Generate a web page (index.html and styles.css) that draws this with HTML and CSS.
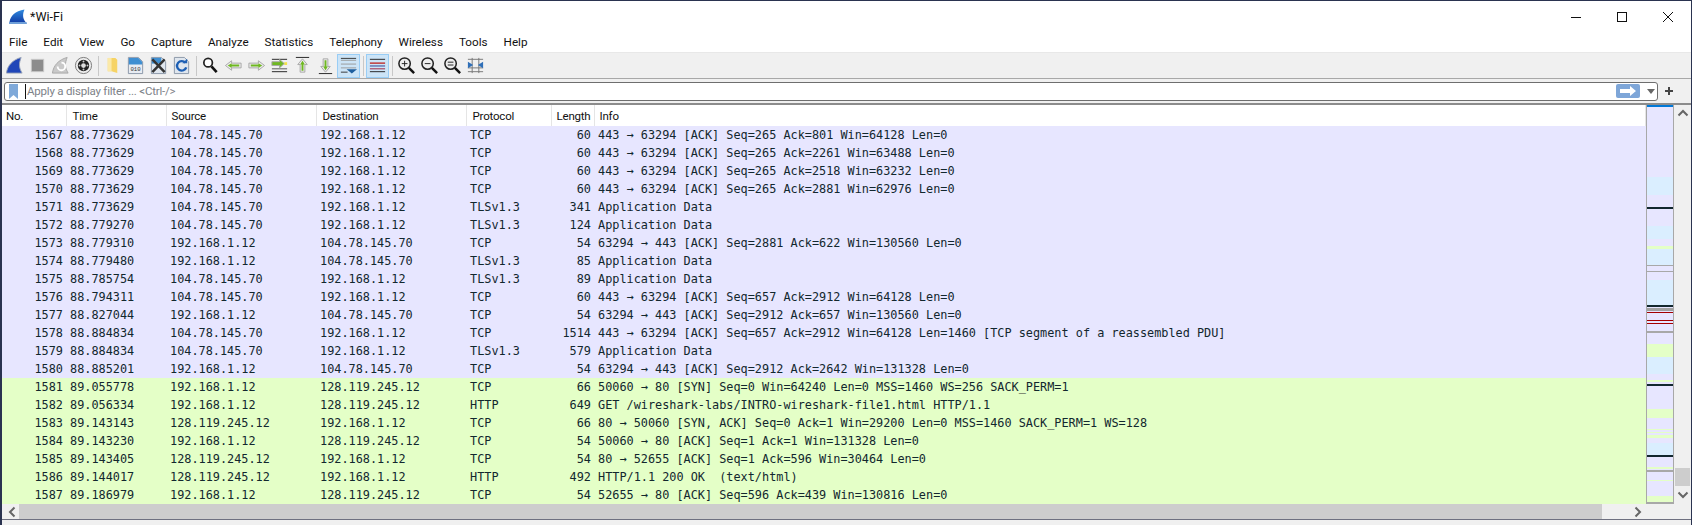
FILE: index.html
```html
<!DOCTYPE html>
<html lang="en">
  <head>
    <meta charset="UTF-8" />
    <title>*Wi-Fi</title>
    <link rel="stylesheet" href="styles.css">
  </head>
  <body>
    <div class="window">
      <header class="titlebar">
        <svg class="appIcon" width="18" height="16" viewBox="0 0 18 16">
          <defs>
            <linearGradient id="fin" x1="0" y1="0" x2="0" y2="1">
              <stop offset="0" stop-color="#2f8be0" />
              <stop offset="1" stop-color="#1340a8" />
            </linearGradient>
          </defs>
          <path d="M0.5 13 C1.5 7 6 2 15.5 0.5 C13.5 5 13.5 9 16.5 13 Z" fill="url(#fin)" />
          <path d="M0 13 H17.5 L18 15 H0 Z" fill="#6f9fd8" />
        </svg>
        <span class="windowName">*Wi-Fi</span>
        <div class="winButtons">
          <svg width="46" height="30" viewBox="0 0 46 30"><path d="M18 15.5 H28" stroke="#111" fill="none" /></svg>
          <svg width="46" height="30" viewBox="0 0 46 30"><rect x="18.5" y="10.5" width="9" height="9" stroke="#111" fill="none" /></svg>
          <svg width="46" height="30" viewBox="0 0 46 30"><path d="M18 10 L28 20 M28 10 L18 20" stroke="#111" fill="none" /></svg>
        </div>
      </header>

      <nav class="menu">
        <span>File</span>
        <span>Edit</span>
        <span>View</span>
        <span>Go</span>
        <span>Capture</span>
        <span>Analyze</span>
        <span>Statistics</span>
        <span>Telephony</span>
        <span>Wireless</span>
        <span>Tools</span>
        <span>Help</span>
      </nav>

      <div class="toolbar">
        <button class="tool"><svg viewBox="0 0 20 20"><path d="M1.500 18 C2.500 10 8 4 17 1.500 C14.500 8 14.500 12 18 18 Z" fill="#2046b8" stroke="#9aa4b8" /></svg></button>
        <button class="tool"><svg viewBox="0 0 20 20"><rect x="3.5" y="3.5" width="13" height="13" fill="#8c8c8c" stroke="#c9c9c9" /></svg></button>
        <button class="tool"><svg viewBox="0 0 20 20"><path d="M1.500 18 C2.500 10 8 4 17 1.500 C14.500 8 14.500 12 18 18 Z" fill="#c9c9c9" stroke="#a8a8a8" /><path d="M11 7 A4 4 0 1 1 7 11" fill="none" stroke="#fff" stroke-width="2" /></svg></button>
        <button class="tool"><svg viewBox="0 0 20 20"><circle cx="10" cy="10" r="8.5" fill="#eee" stroke="#777" /><circle cx="10" cy="10" r="6" fill="#222" /><circle cx="10" cy="10" r="2.5" fill="#ddd" /><circle cx="10" cy="5.8" r="1" fill="#ccc" /><circle cx="10" cy="14.2" r="1" fill="#ccc" /><circle cx="5.8" cy="10" r="1" fill="#ccc" /><circle cx="14.2" cy="10" r="1" fill="#ccc" /></svg></button>
        <i class="sep"></i>
        <button class="tool"><svg viewBox="0 0 20 20"><path d="M5 2 H13 L15 4 V18 L9 16 H5 Z" fill="#f6d365" /><path d="M5 2 H9 V16 H5 Z" fill="#fbe9a8" /></svg></button>
        <button class="tool"><svg viewBox="0 0 20 20"><path d="M2.500 1.500 H13 L17.500 6 V18.500 H2.500 Z" fill="#e8ecf2" stroke="#8a97a8" /><path d="M3 2 H13 L17 6 V9 H3 Z" fill="#3f8fd2" /><text x="10" y="15.500" class="fileText">010</text></svg></button>
        <button class="tool"><svg viewBox="0 0 20 20"><path d="M2.500 1.500 H13 L17.500 6 V18.500 H2.500 Z" fill="#dfe6ee" stroke="#8a97a8" /><path d="M3 2 H13 V8 H3 Z" fill="#3f8fd2" /><path d="M3.500 3.500 L16.500 17 M16.500 3.500 L3.500 17" stroke="#333" stroke-width="2.600" /></svg></button>
        <button class="tool"><svg viewBox="0 0 20 20"><path d="M2.500 1.500 H13 L17.500 6 V18.500 H2.500 Z" fill="#dfe6ee" stroke="#8a97a8" /><path d="M14 7 A5 5 0 1 0 15 12" fill="none" stroke="#1d5fb4" stroke-width="2.500" /><path d="M11 7.500 H16 V3 Z" fill="#1d5fb4" /></svg></button>
        <i class="sep"></i>
        <button class="tool"><svg viewBox="0 0 20 20"><circle cx="7.500" cy="7" r="4.500" fill="#fff" stroke="#222" stroke-width="1.800" /><path d="M11 11 L16.500 17" stroke="#111" stroke-width="2.800" /></svg></button>
        <button class="tool"><svg viewBox="0 0 20 20"><path d="M1.500 10 L8 5 V7.500 H18 V12.500 H8 V15 Z" fill="#eaeaea" stroke="#a8a8a8" /><path d="M4 10 L8 7.500 V9 H16 V11 H8 V12.500 Z" fill="#6fb821" /></svg></button>
        <button class="tool"><svg viewBox="0 0 20 20"><path d="M18.500 10 L12 5 V7.500 H2 V12.500 H12 V15 Z" fill="#eaeaea" stroke="#a8a8a8" /><path d="M16 10 L12 7.500 V9 H4 V11 H12 V12.500 Z" fill="#6fb821" /></svg></button>
        <button class="tool"><svg viewBox="0 0 20 20"><path d="M2 3.500 H18 M2 16.500 H18" stroke="#222" /><path d="M2 13.500 H18" stroke="#555" /><path d="M15 6.500 h3 v3 h-3 z" fill="#f2e24a" /><path d="M15 8 L10 3.500 V6 H2 V10 H10 V12.500 Z" fill="#6fb821" stroke="#a8a8a8" /></svg></button>
        <button class="tool"><svg viewBox="0 0 20 20"><path d="M3 1.500 H17" stroke="#222" /><path d="M10 3 L15 9 H12.500 V17 H7.500 V9 H5 Z" fill="#eaeaea" stroke="#a8a8a8" /><path d="M10 5 L12.500 9 H11 V15.500 H9 V9 H7.500 Z" fill="#6fb821" /></svg></button>
        <button class="tool"><svg viewBox="0 0 20 20"><path d="M3 18.500 H17" stroke="#222" /><path d="M10 17 L15 11 H12.500 V3 H7.500 V11 H5 Z" fill="#eaeaea" stroke="#a8a8a8" /><path d="M10 15 L12.500 11 H11 V4.500 H9 V11 H7.500 Z" fill="#6fb821" /></svg></button>
        <button class="tool on"><svg viewBox="0 0 20 20"><path d="M2 4.500 H18 M2 8.500 H18 M2 12.500 H18" stroke="#9a9a9a" /><path d="M2 2.500 H18 M2 17 H9" stroke="#333" /><path d="M8 14 H19 L13.500 18.500 Z" fill="#1f5f9f" /></svg></button>
        <i class="sep"></i>
        <button class="tool on"><svg viewBox="0 0 20 20"><path d="M2 3.500 H18" stroke="#222" /><path d="M2 7.500 H18" stroke="#c03030" stroke-width="1.500" /><path d="M2 10.500 H18" stroke="#2a3c90" /><path d="M2 13.500 H18" stroke="#a02040" /><path d="M2 16.500 H18" stroke="#222" /></svg></button>
        <i class="sep"></i>
        <button class="tool"><svg viewBox="0 0 20 20"><circle cx="8" cy="8" r="6" fill="#eee" stroke="#222" stroke-width="1.600" /><path d="M5 8 H11 M8 5 V11" stroke="#222" /><path d="M12.500 12.500 L18 18" stroke="#111" stroke-width="2.600" /></svg></button>
        <button class="tool"><svg viewBox="0 0 20 20"><circle cx="8" cy="8" r="6" fill="#eee" stroke="#222" stroke-width="1.600" /><path d="M5 8 H11" stroke="#222" /><path d="M12.500 12.500 L18 18" stroke="#111" stroke-width="2.600" /></svg></button>
        <button class="tool"><svg viewBox="0 0 20 20"><circle cx="8" cy="8" r="6" fill="#eee" stroke="#222" stroke-width="1.600" /><path d="M5 6.500 H11 M5 9.500 H11" stroke="#222" /><path d="M12.500 12.500 L18 18" stroke="#111" stroke-width="2.600" /></svg></button>
        <button class="tool"><svg viewBox="0 0 20 20"><path d="M2 3.500 H18 M2 16.500 H18 M2 12.500 H18 M6.500 2 V18 M13.500 2 V18" stroke="#777" /><path d="M2 6 L7.500 9.500 L2 13 Z M18 6 L12.500 9.500 L18 13 Z" fill="#2f6fb8" /></svg></button>
      </div>

      <div class="filterRow">
        <div class="filterBox">
          <svg class="bookmark" width="9" height="15" viewBox="0 0 9 15"><path d="M0 0 H9 V15 L4.500 11 L0 15 Z" fill="#7fa9d9" /></svg>
          <span class="cursor"></span>
          <span class="placeholder">Apply a display filter ... &lt;Ctrl-/&gt;</span>
          <span class="goBtn"><svg width="16" height="10" viewBox="0 0 16 10"><path d="M0 3 H10 V0 L16 5 L10 10 V7 H0 Z" fill="#fff" /></svg></span>
          <svg class="dropArrow" width="8" height="5" viewBox="0 0 8 5"><path d="M0 0 H8 L4 5 Z" fill="#666" /></svg>
        </div>
        <svg width="10" height="10" viewBox="0 0 10 10"><path d="M5 1 V9 M1 5 H9" stroke="#444" stroke-width="2" /></svg>
      </div>

      <main class="capture">
        <div class="listPane">
          <table class="packets">
            <colgroup>
              <col class="colNo" /><col class="colTime" /><col class="colSrc" /><col class="colDst" /><col class="colProto" /><col class="colLen" /><col />
            </colgroup>
            <thead>
              <tr><th>No.</th><th>Time</th><th>Source</th><th>Destination</th><th>Protocol</th><th>Length</th><th>Info</th></tr>
            </thead>
            <tbody>
              <tr class="tcp"><td class="num">1567</td><td>88.773629</td><td>104.78.145.70</td><td>192.168.1.12</td><td>TCP</td><td class="num">60</td><td>443 → 63294 [ACK] Seq=265 Ack=801 Win=64128 Len=0</td></tr>
              <tr class="tcp"><td class="num">1568</td><td>88.773629</td><td>104.78.145.70</td><td>192.168.1.12</td><td>TCP</td><td class="num">60</td><td>443 → 63294 [ACK] Seq=265 Ack=2261 Win=63488 Len=0</td></tr>
              <tr class="tcp"><td class="num">1569</td><td>88.773629</td><td>104.78.145.70</td><td>192.168.1.12</td><td>TCP</td><td class="num">60</td><td>443 → 63294 [ACK] Seq=265 Ack=2518 Win=63232 Len=0</td></tr>
              <tr class="tcp"><td class="num">1570</td><td>88.773629</td><td>104.78.145.70</td><td>192.168.1.12</td><td>TCP</td><td class="num">60</td><td>443 → 63294 [ACK] Seq=265 Ack=2881 Win=62976 Len=0</td></tr>
              <tr class="tcp"><td class="num">1571</td><td>88.773629</td><td>104.78.145.70</td><td>192.168.1.12</td><td>TLSv1.3</td><td class="num">341</td><td>Application Data</td></tr>
              <tr class="tcp"><td class="num">1572</td><td>88.779270</td><td>104.78.145.70</td><td>192.168.1.12</td><td>TLSv1.3</td><td class="num">124</td><td>Application Data</td></tr>
              <tr class="tcp"><td class="num">1573</td><td>88.779310</td><td>192.168.1.12</td><td>104.78.145.70</td><td>TCP</td><td class="num">54</td><td>63294 → 443 [ACK] Seq=2881 Ack=622 Win=130560 Len=0</td></tr>
              <tr class="tcp"><td class="num">1574</td><td>88.779480</td><td>192.168.1.12</td><td>104.78.145.70</td><td>TLSv1.3</td><td class="num">85</td><td>Application Data</td></tr>
              <tr class="tcp"><td class="num">1575</td><td>88.785754</td><td>104.78.145.70</td><td>192.168.1.12</td><td>TLSv1.3</td><td class="num">89</td><td>Application Data</td></tr>
              <tr class="tcp"><td class="num">1576</td><td>88.794311</td><td>104.78.145.70</td><td>192.168.1.12</td><td>TCP</td><td class="num">60</td><td>443 → 63294 [ACK] Seq=657 Ack=2912 Win=64128 Len=0</td></tr>
              <tr class="tcp"><td class="num">1577</td><td>88.827044</td><td>192.168.1.12</td><td>104.78.145.70</td><td>TCP</td><td class="num">54</td><td>63294 → 443 [ACK] Seq=2912 Ack=657 Win=130560 Len=0</td></tr>
              <tr class="tcp"><td class="num">1578</td><td>88.884834</td><td>104.78.145.70</td><td>192.168.1.12</td><td>TCP</td><td class="num">1514</td><td>443 → 63294 [ACK] Seq=657 Ack=2912 Win=64128 Len=1460 [TCP segment of a reassembled PDU]</td></tr>
              <tr class="tcp"><td class="num">1579</td><td>88.884834</td><td>104.78.145.70</td><td>192.168.1.12</td><td>TLSv1.3</td><td class="num">579</td><td>Application Data</td></tr>
              <tr class="tcp"><td class="num">1580</td><td>88.885201</td><td>192.168.1.12</td><td>104.78.145.70</td><td>TCP</td><td class="num">54</td><td>63294 → 443 [ACK] Seq=2912 Ack=2642 Win=131328 Len=0</td></tr>
              <tr class="http"><td class="num">1581</td><td>89.055778</td><td>192.168.1.12</td><td>128.119.245.12</td><td>TCP</td><td class="num">66</td><td>50060 → 80 [SYN] Seq=0 Win=64240 Len=0 MSS=1460 WS=256 SACK_PERM=1</td></tr>
              <tr class="http"><td class="num">1582</td><td>89.056334</td><td>192.168.1.12</td><td>128.119.245.12</td><td>HTTP</td><td class="num">649</td><td>GET /wireshark-labs/INTRO-wireshark-file1.html HTTP/1.1</td></tr>
              <tr class="http"><td class="num">1583</td><td>89.143143</td><td>128.119.245.12</td><td>192.168.1.12</td><td>TCP</td><td class="num">66</td><td>80 → 50060 [SYN, ACK] Seq=0 Ack=1 Win=29200 Len=0 MSS=1460 SACK_PERM=1 WS=128</td></tr>
              <tr class="http"><td class="num">1584</td><td>89.143230</td><td>192.168.1.12</td><td>128.119.245.12</td><td>TCP</td><td class="num">54</td><td>50060 → 80 [ACK] Seq=1 Ack=1 Win=131328 Len=0</td></tr>
              <tr class="http"><td class="num">1585</td><td>89.143405</td><td>128.119.245.12</td><td>192.168.1.12</td><td>TCP</td><td class="num">54</td><td>80 → 52655 [ACK] Seq=1 Ack=596 Win=30464 Len=0</td></tr>
              <tr class="http"><td class="num">1586</td><td>89.144017</td><td>128.119.245.12</td><td>192.168.1.12</td><td>HTTP</td><td class="num">492</td><td>HTTP/1.1 200 OK  (text/html)</td></tr>
              <tr class="http"><td class="num">1587</td><td>89.186979</td><td>192.168.1.12</td><td>128.119.245.12</td><td>TCP</td><td class="num">54</td><td>52655 → 80 [ACK] Seq=596 Ack=439 Win=130816 Len=0</td></tr>
            </tbody>
          </table>
        </div>

        <svg class="minimap" viewBox="0 2 28 397" preserveAspectRatio="none">
          <rect y="2" width="28" height="397" fill="#e7e6ff" />
          <rect y="2" width="28" height="2" fill="#0078d7" />
          <rect y="74" width="28" height="18" fill="#daeeff" />
          <rect y="104" width="28" height="2" fill="#12272e" />
          <rect y="123" width="28" height="13" fill="#daeeff" />
          <rect y="143" width="28" height="3" fill="#e4ffc7" />
          <rect y="146" width="28" height="16" fill="#daeeff" />
          <rect y="162" width="28" height="1" fill="#a8a8a8" />
          <rect y="168" width="28" height="1" fill="#a8a8a8" />
          <rect y="177" width="28" height="25" fill="#daeeff" />
          <rect y="202" width="28" height="2" fill="#12272e" />
          <rect y="205" width="28" height="3" fill="#a0a0a0" />
          <rect y="209" width="28" height="1" fill="#a40000" />
          <rect y="217" width="28" height="1" fill="#a40000" />
          <rect y="220" width="28" height="1" fill="#a40000" />
          <rect y="228" width="28" height="2" fill="#a8a8a8" />
          <rect y="241" width="28" height="13" fill="#e4ffc7" />
          <rect y="254" width="28" height="17" fill="#daeeff" />
          <rect y="277" width="28" height="2" fill="#e4ffc7" />
          <rect y="281" width="28" height="2" fill="#12272e" />
          <rect y="306" width="28" height="9" fill="#e4ffc7" />
          <rect y="326" width="28" height="1" fill="#e4ffc7" />
          <rect y="329" width="28" height="1" fill="#e4ffc7" />
          <rect y="332" width="28" height="3" fill="#e4ffc7" />
          <rect y="340" width="28" height="12" fill="#daeeff" />
          <rect y="352" width="28" height="2" fill="#12272e" />
          <rect y="364" width="28" height="2" fill="#e4ffc7" />
          <rect y="367" width="28" height="2" fill="#a8a8a8" />
          <rect y="377" width="28" height="1" fill="#e4ffc7" />
          <rect y="393" width="28" height="6" fill="#e4ffc7" />
        </svg>

        <div class="vScroll">
          <svg width="12" height="8" viewBox="0 0 12 8"><path d="M1.500 6.500 L6 2 L10.500 6.500" fill="none" stroke="#666" stroke-width="2" /></svg>
          <span class="vThumb"></span>
          <svg width="12" height="8" viewBox="0 0 12 8"><path d="M1.500 1.500 L6 6 L10.500 1.500" fill="none" stroke="#666" stroke-width="2" /></svg>
        </div>
      </main>

      <div class="hScroll">
        <svg width="8" height="12" viewBox="0 0 8 12"><path d="M6.500 1.500 L2 6 L6.500 10.500" fill="none" stroke="#666" stroke-width="2" /></svg>
        <span class="hThumb"></span>
        <svg width="8" height="12" viewBox="0 0 8 12"><path d="M1.500 1.500 L6 6 L1.500 10.500" fill="none" stroke="#666" stroke-width="2" /></svg>
      </div>
      <div class="statusStrip"></div>
    </div>
  </body>
</html>
```

FILE: styles.css
```css
* {
  box-sizing: border-box;
}

html,
body {
  margin: 0;
  height: 525px;
  overflow: hidden;
  background: #f0f0f0;
}

.window {
  height: 525px;
  display: flex;
  flex-direction: column;
  border-top: 1px solid #2a3350;
  border-left: 2px solid #2a3350;
  border-right: 1px solid #2a3350;
  font-family: Roboto, "Noto Sans", sans-serif;
  font-size: 12px;
  color: #111;
}

/* title bar and menu */
.titlebar {
  height: 31px;
  display: flex;
  align-items: center;
  background: #fff;
  padding-left: 7px;
}
.windowName {
  margin-left: 3px;
  font-size: 12.5px;
}
.winButtons {
  margin-left: auto;
  display: flex;
}
.winButtons svg {
  display: block;
}

.menu {
  height: 21px;
  display: flex;
  align-items: center;
  gap: 16px;
  padding-left: 7px;
  font-size: 11.7px;
  background: #fff;
  border-bottom: 1px solid #e8e8e8;
}

/* toolbar */
.toolbar {
  height: 26px;
  display: flex;
  align-items: center;
  padding-left: 1px;
  background: #f0f0f0;
  border-bottom: 1px solid #a8a8a8;
}
.tool {
  width: 23px;
  height: 24px;
  padding: 0;
  display: flex;
  align-items: center;
  justify-content: center;
  border: 1px solid transparent;
  background: none;
}
.tool svg {
  width: 19px;
  height: 19px;
}
.tool.on {
  background: #cce4f7;
  border: 1px solid #99cdf5;
}
.sep {
  width: 1px;
  height: 20px;
  margin: 0 2.5px;
  background: #c8c8c8;
}
.fileText {
  font-family: "Liberation Mono", monospace;
  font-size: 6px;
  text-anchor: middle;
  fill: #333;
}

/* display filter */
.filterRow {
  height: 26px;
  display: flex;
  align-items: center;
  gap: 6px;
  padding: 0 0 0 2px;
  background: #f0f0f0;
  border-bottom: 2px solid #8c8c8c;
}
.filterBox {
  width: 1654px;
  height: 19px;
  display: flex;
  align-items: center;
  padding-left: 4px;
  background: #fff;
  border: 1px solid #6e6e6e;
  border-radius: 3px;
}
.cursor {
  width: 1px;
  height: 15px;
  margin-left: 7px;
  background: #111;
}
.placeholder {
  margin-left: 1px;
  font-size: 11.5px;
  letter-spacing: -0.2px;
  color: #7d8288;
}
.goBtn {
  margin-left: auto;
  width: 24px;
  height: 14px;
  display: flex;
  align-items: center;
  justify-content: center;
  background: #7ea6d8;
  border-radius: 2px;
}
.dropArrow {
  margin: 0 2px 0 7px;
}

/* packet list */
.capture {
  height: 399px;
  display: flex;
  background: #fff;
}
.listPane {
  width: 1644px;
  overflow: hidden;
}
.packets {
  width: 1644px;
  table-layout: fixed;
  border-collapse: collapse;
  white-space: pre;
}
.colNo { width: 64px; }
.colTime { width: 100px; }
.colSrc { width: 150px; }
.colDst { width: 150px; }
.colProto { width: 85px; }
.colLen { width: 43px; }

th {
  height: 21px;
  padding: 0 0 0 5px;
  font-weight: 400;
  font-size: 11.5px;
  letter-spacing: -0.2px;
  text-align: left;
  background: #fff;
  border-right: 1px solid #e5e5e5;
  overflow: hidden;
}
th:first-child {
  padding-left: 4px;
}
th:nth-child(2),
th:nth-child(4),
th:nth-child(5) {
  padding-left: 6px;
}
td {
  height: 18px;
  padding: 0 0 0 4px;
  font-family: "DejaVu Sans Mono", monospace;
  font-size: 11.85px;
  color: #12272e;
}
td.num {
  padding: 0 3px 0 0;
  text-align: right;
}
.tcp {
  background: #e7e6ff;
}
.http {
  background: #e4ffc7;
}

.minimap {
  width: 28px;
  height: 399px;
  flex: none;
  border: solid #a8a8a8;
  border-width: 0 1px 2px;
  background: #e7e6ff;
}

.vScroll {
  width: 17px;
  display: flex;
  flex-direction: column;
  align-items: center;
  padding: 4px 0 5px;
  background: #f0f0f0;
}
.vThumb {
  width: 15px;
  height: 18px;
  margin-top: auto;
  margin-bottom: 5px;
  background: #cdcdcd;
}

.hScroll {
  height: 15px;
  display: flex;
  align-items: center;
  padding: 0 49px 0 6px;
  background: #f0f0f0;
}
.hThumb {
  flex: 1;
  height: 15px;
  margin: 0 32px 0 3px;
  background: #cdcdcd;
}
.statusStrip {
  flex: 1;
  border-top: 1px solid #6e7080;
  background: #f0f0f0;
}
```
